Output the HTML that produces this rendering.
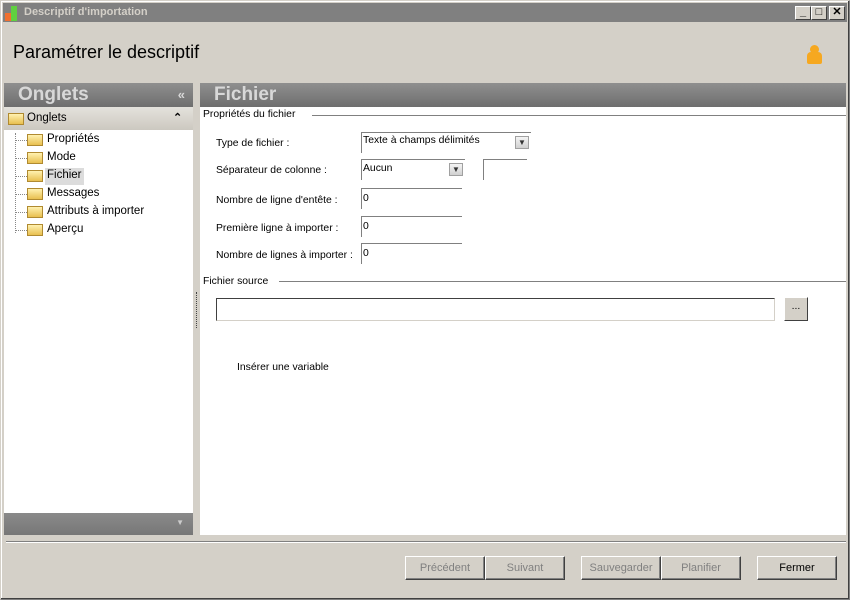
<!DOCTYPE html>
<html><head><meta charset="utf-8"><style>
*{margin:0;padding:0;box-sizing:border-box}
body{width:850px;height:600px;background:#d4d0c8;font-family:"Liberation Sans",sans-serif;font-size:10.4px;color:#000;position:relative;overflow:hidden}
.a{position:absolute}
.win{left:0;top:0;width:850px;height:600px;border:1px solid #808080;border-top-color:#d4d0c8;border-left-color:#d4d0c8;box-shadow:inset -1px -1px #404040,inset 1px 1px #fff}
.title{left:3px;top:3px;width:844px;height:19px;background:#808080;color:#d4d0c8;font-weight:bold;font-size:11px;line-height:19px;padding-left:21px}
.tb{top:6px;width:16px;height:14px;background:#d4d0c8;border:1px solid;border-color:#fff #404040 #404040 #fff;font-size:11px;line-height:11px;text-align:center;font-weight:bold}
.hdr{height:24px;background:linear-gradient(#8f8f8f,#6e6e6e);color:#d8d8d8;font-weight:bold;font-size:19px;line-height:24px;padding-left:14px}
.lbl{left:216px}
.inp{left:361px;width:101px;height:21px;border-top:1px solid #808080;border-left:1px solid #808080;background:#fff;padding:4px 1px 0;font-size:10.4px}
.dd{width:14px;height:13px;border:1px solid #a0a0a0;background:linear-gradient(#f4f4f4,#d0d0d0);font-size:8px;line-height:11px;text-align:center;color:#333}
.fold{width:16px;height:12px;background:linear-gradient(#fff2b0,#e8c050);border:1px solid #b08a30}
.tr{left:47px;font-size:11.5px}
.btn{top:556px;height:24px;border:1px solid;border-color:#fff #404040 #404040 #fff;box-shadow:inset -1px -1px #808080;text-align:center;line-height:22px;color:#808080;font-size:11px}
</style></head><body>
<div class="a win"></div>
<div class="a title">Descriptif d'importation</div>
<div class="a" style="left:5px;top:6px;width:6px;height:14px;background:#808080"></div>
<div class="a" style="left:5px;top:13px;width:6px;height:8px;background:#f07030"></div>
<div class="a" style="left:11px;top:6px;width:6px;height:15px;background:#60d040"></div>
<div class="a tb" style="left:795px">_</div>
<div class="a tb" style="left:811px">□</div>
<div class="a tb" style="left:829px">✕</div>
<div class="a" style="left:13px;top:42px;font-size:18px">Paramétrer le descriptif</div>
<div class="a" style="left:810px;top:45px;width:9px;height:9px;border-radius:50%;background:#f6a820"></div>
<div class="a" style="left:807px;top:52px;width:15px;height:12px;border-radius:4px 4px 2px 2px;background:#f6a820"></div>

<div class="a" style="left:4px;top:83px;width:189px;height:452px;background:#fff"></div>
<div class="a hdr" style="left:4px;top:83px;width:189px">Onglets<span style="position:absolute;right:8px;font-size:13px;top:0">«</span></div>
<div class="a" style="left:4px;top:107px;width:189px;height:23px;background:linear-gradient(#e4e2dc,#ccc8c0)"></div>
<div class="a fold" style="left:8px;top:113px"></div>
<div class="a" style="left:27px;top:112px;font-size:11.5px">Onglets</div>
<div class="a" style="left:173px;top:111px;font-size:11px;font-weight:bold">⌃</div>
<div class="a" style="left:15px;top:133px;height:100px;border-left:1px dotted #888"></div>
<div class="a fold" style="left:27px;top:134px"></div><div class="a" style="left:15px;top:140px;width:12px;border-top:1px dotted #888"></div><div class="a tr" style="top:133px">Propriétés</div>
<div class="a fold" style="left:27px;top:152px"></div><div class="a" style="left:15px;top:158px;width:12px;border-top:1px dotted #888"></div><div class="a tr" style="top:151px">Mode</div>
<div class="a fold" style="left:27px;top:170px"></div><div class="a" style="left:15px;top:176px;width:12px;border-top:1px dotted #888"></div><div class="a" style="left:45px;top:168px;width:39px;height:17px;background:#dcdcdc"></div><div class="a tr" style="top:169px">Fichier</div>
<div class="a fold" style="left:27px;top:188px"></div><div class="a" style="left:15px;top:194px;width:12px;border-top:1px dotted #888"></div><div class="a tr" style="top:187px">Messages</div>
<div class="a fold" style="left:27px;top:206px"></div><div class="a" style="left:15px;top:212px;width:12px;border-top:1px dotted #888"></div><div class="a tr" style="top:205px">Attributs à importer</div>
<div class="a fold" style="left:27px;top:224px"></div><div class="a" style="left:15px;top:230px;width:12px;border-top:1px dotted #888"></div><div class="a tr" style="top:223px">Aperçu</div>
<div class="a" style="left:4px;top:513px;width:189px;height:22px;background:linear-gradient(#8a8a8a,#777)"><span style="position:absolute;right:9px;top:5px;font-size:8px;color:#ccc">▼</span></div>
<div class="a" style="left:196px;top:292px;height:36px;border-left:1px dotted #444"></div>

<div class="a" style="left:200px;top:83px;width:646px;height:452px;background:#fff"></div>
<div class="a hdr" style="left:200px;top:83px;width:646px">Fichier</div>
<div class="a" style="left:203px;top:109px">Propriétés du fichier</div>
<div class="a" style="left:312px;top:115px;width:534px;border-top:1px solid #808080"></div>
<div class="a lbl" style="top:138px">Type de fichier :</div>
<div class="a inp" style="top:132px;width:170px;padding-top:2px">Texte à champs délimités</div>
<div class="a dd" style="left:515px;top:136px">▼</div>
<div class="a lbl" style="top:165px">Séparateur de colonne :</div>
<div class="a inp" style="top:159px;width:104px;padding-top:3px">Aucun</div>
<div class="a dd" style="left:449px;top:163px">▼</div>
<div class="a inp" style="left:483px;top:159px;width:44px"></div>
<div class="a lbl" style="top:195px">Nombre de ligne d'entête :</div>
<div class="a inp" style="top:188px">0</div>
<div class="a lbl" style="top:223px">Première ligne à importer :</div>
<div class="a inp" style="top:216px">0</div>
<div class="a lbl" style="top:250px">Nombre de lignes à importer :</div>
<div class="a inp" style="top:243px">0</div>
<div class="a" style="left:203px;top:276px">Fichier source</div>
<div class="a" style="left:279px;top:281px;width:567px;border-top:1px solid #808080"></div>
<div class="a" style="left:216px;top:298px;width:559px;height:23px;border:1px solid;border-color:#404040 #d4d0c8 #d4d0c8 #404040;background:#fff"></div>
<div class="a" style="left:784px;top:297px;width:24px;height:24px;background:#d4d0c8;border:1px solid;border-color:#fff #404040 #404040 #fff;text-align:center;line-height:18px">...</div>
<div class="a" style="left:237px;top:362px">Insérer une variable</div>

<div class="a" style="left:6px;top:541px;width:840px;border-top:1px solid #808080;border-bottom:1px solid #fff"></div>
<div class="a btn" style="left:405px;width:80px">Précédent</div>
<div class="a btn" style="left:485px;width:80px">Suivant</div>
<div class="a btn" style="left:581px;width:80px">Sauvegarder</div>
<div class="a btn" style="left:661px;width:80px">Planifier</div>
<div class="a btn" style="left:757px;width:80px;color:#000">Fermer</div>
</body></html>
